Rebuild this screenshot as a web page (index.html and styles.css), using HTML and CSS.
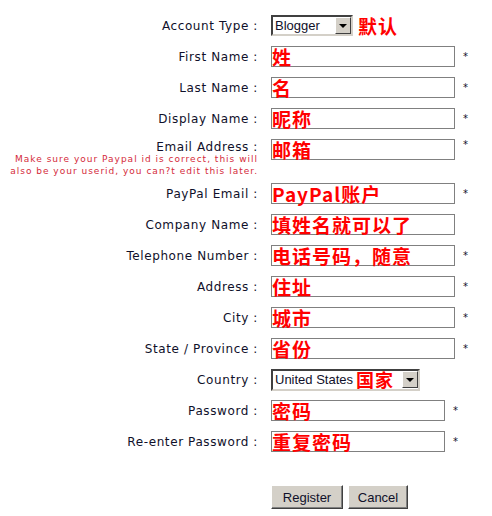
FILE: index.html
```html
<!DOCTYPE html>
<html lang="en">
<head>
    <meta charset="UTF-8">
    <title>Register</title>
    <link rel="stylesheet" href="styles.css">
</head>
<body>

<form class="reg-form">
    <div class="row">
        <label class="lbl">Account Type :</label>
        <div class="select select-account">
            <span class="opt">Blogger</span>
            <span class="drop"><span class="tri"></span></span>
        </div>
        <span class="note note-side">默认</span>
    </div>
    <div class="row">
        <label class="lbl">First Name :</label>
        <div class="box"><span class="note">姓</span></div>
        <span class="req">*</span>
    </div>
    <div class="row">
        <label class="lbl">Last Name :</label>
        <div class="box"><span class="note">名</span></div>
        <span class="req">*</span>
    </div>
    <div class="row">
        <label class="lbl">Display Name :</label>
        <div class="box"><span class="note">昵称</span></div>
        <span class="req">*</span>
    </div>
    <div class="row row-email">
        <div class="lbl">
            Email Address :
            <p class="hint">Make sure your Paypal id is correct, this will<br>also be your userid, you can?t edit this later.</p>
        </div>
        <div class="box"><span class="note">邮箱</span></div>
        <span class="req">*</span>
    </div>
    <div class="row">
        <label class="lbl">PayPal Email :</label>
        <div class="box"><span class="note">PayPal账户</span></div>
        <span class="req">*</span>
    </div>
    <div class="row">
        <label class="lbl">Company Name :</label>
        <div class="box"><span class="note">填姓名就可以了</span></div>
    </div>
    <div class="row">
        <label class="lbl">Telephone Number :</label>
        <div class="box"><span class="note">电话号码，随意</span></div>
        <span class="req">*</span>
    </div>
    <div class="row">
        <label class="lbl">Address :</label>
        <div class="box"><span class="note">住址</span></div>
        <span class="req">*</span>
    </div>
    <div class="row">
        <label class="lbl">City :</label>
        <div class="box"><span class="note">城市</span></div>
        <span class="req">*</span>
    </div>
    <div class="row">
        <label class="lbl">State / Province :</label>
        <div class="box"><span class="note">省份</span></div>
        <span class="req">*</span>
    </div>
    <div class="row">
        <label class="lbl">Country :</label>
        <div class="select select-country">
            <span class="opt">United States <span class="note">国家</span></span>
            <span class="drop"><span class="tri"></span></span>
        </div>
    </div>
    <div class="row">
        <label class="lbl">Password :</label>
        <div class="box box-short"><span class="note">密码</span></div>
        <span class="req">*</span>
    </div>
    <div class="row">
        <label class="lbl">Re-enter Password :</label>
        <div class="box box-short"><span class="note">重复密码</span></div>
        <span class="req">*</span>
    </div>

    <div class="actions">
        <button type="button" class="btn btn-register">Register</button>
        <button type="button" class="btn btn-cancel">Cancel</button>
    </div>
</form>

</body>
</html>
```

FILE: styles.css
```css
body {
    margin: 0;
    background: #fff;
    color: #000;
    font-family: "DejaVu Sans", Verdana, sans-serif;
    font-size: 12px;
}
.reg-form {
    padding-top: 15px;
}
.row {
    display: flex;
    align-items: center;
    height: 21px;
    margin-bottom: 10px;
}
.lbl {
    flex: none;
    width: 258px;
    margin-right: 13px;
    text-align: right;
    white-space: nowrap;
    letter-spacing: 0.6px;
    color: #10102a;
}
.row-email {
    align-items: flex-start;
    height: 34px;
}
.row-email .lbl {
    line-height: 12px;
    padding-top: 2px;
}
.hint {
    margin: 0;
    font-size: 9px;
    letter-spacing: 1px;
    line-height: 12px;
    color: #d42a3a;
}
.box {
    flex: none;
    width: 184px;
    height: 21px;
    box-sizing: border-box;
    border: 1px solid #808080;
    display: flex;
    align-items: center;
}
.box-short {
    width: 174px;
}
.note {
    font-family: "Noto Sans CJK SC", sans-serif;
    font-weight: bold;
    font-size: 19px;
    letter-spacing: 1px;
    color: #ff0000;
    line-height: 19px;
    white-space: nowrap;
}
.note-side {
    margin-left: 5px;
}
.req {
    margin-left: 8px;
    font-size: 10px;
    color: #10102a;
}
.select {
    flex: none;
    height: 21px;
    box-sizing: border-box;
    border: 2px solid;
    border-color: #404040 #d4d0c8 #d4d0c8 #404040;
    background: #fff;
    display: flex;
    align-items: center;
    justify-content: space-between;
    font-family: "Liberation Sans", Arial, sans-serif;
    font-size: 13px;
}
.select-account {
    width: 82px;
}
.select-country {
    width: 149px;
    height: 22px;
}
.opt {
    display: flex;
    align-items: center;
    gap: 3px;
    padding-left: 2px;
    white-space: nowrap;
    color: #10102a;
}
.select-country .note {
    font-size: 18px;
}
.drop {
    width: 16px;
    height: 17px;
    box-sizing: border-box;
    background: #d4d0c8;
    border: 1px solid;
    border-color: #fff #404040 #404040 #fff;
    display: flex;
    align-items: center;
    justify-content: center;
}
.tri {
    width: 0;
    height: 0;
    border-left: 4px solid transparent;
    border-right: 4px solid transparent;
    border-top: 4px solid #000;
}
.actions {
    margin-top: 33px;
    padding-left: 271px;
    display: flex;
    gap: 5px;
}
.btn {
    height: 24px;
    background: #d4d0c8;
    border: 1px solid;
    border-color: #fff #404040 #404040 #fff;
    box-shadow: inset -1px -1px #808080;
    font-family: "Liberation Sans", Arial, sans-serif;
    font-size: 13px;
    color: #10102a;
    padding: 0;
}
.btn-register {
    width: 72px;
}
.btn-cancel {
    width: 60px;
}
```
